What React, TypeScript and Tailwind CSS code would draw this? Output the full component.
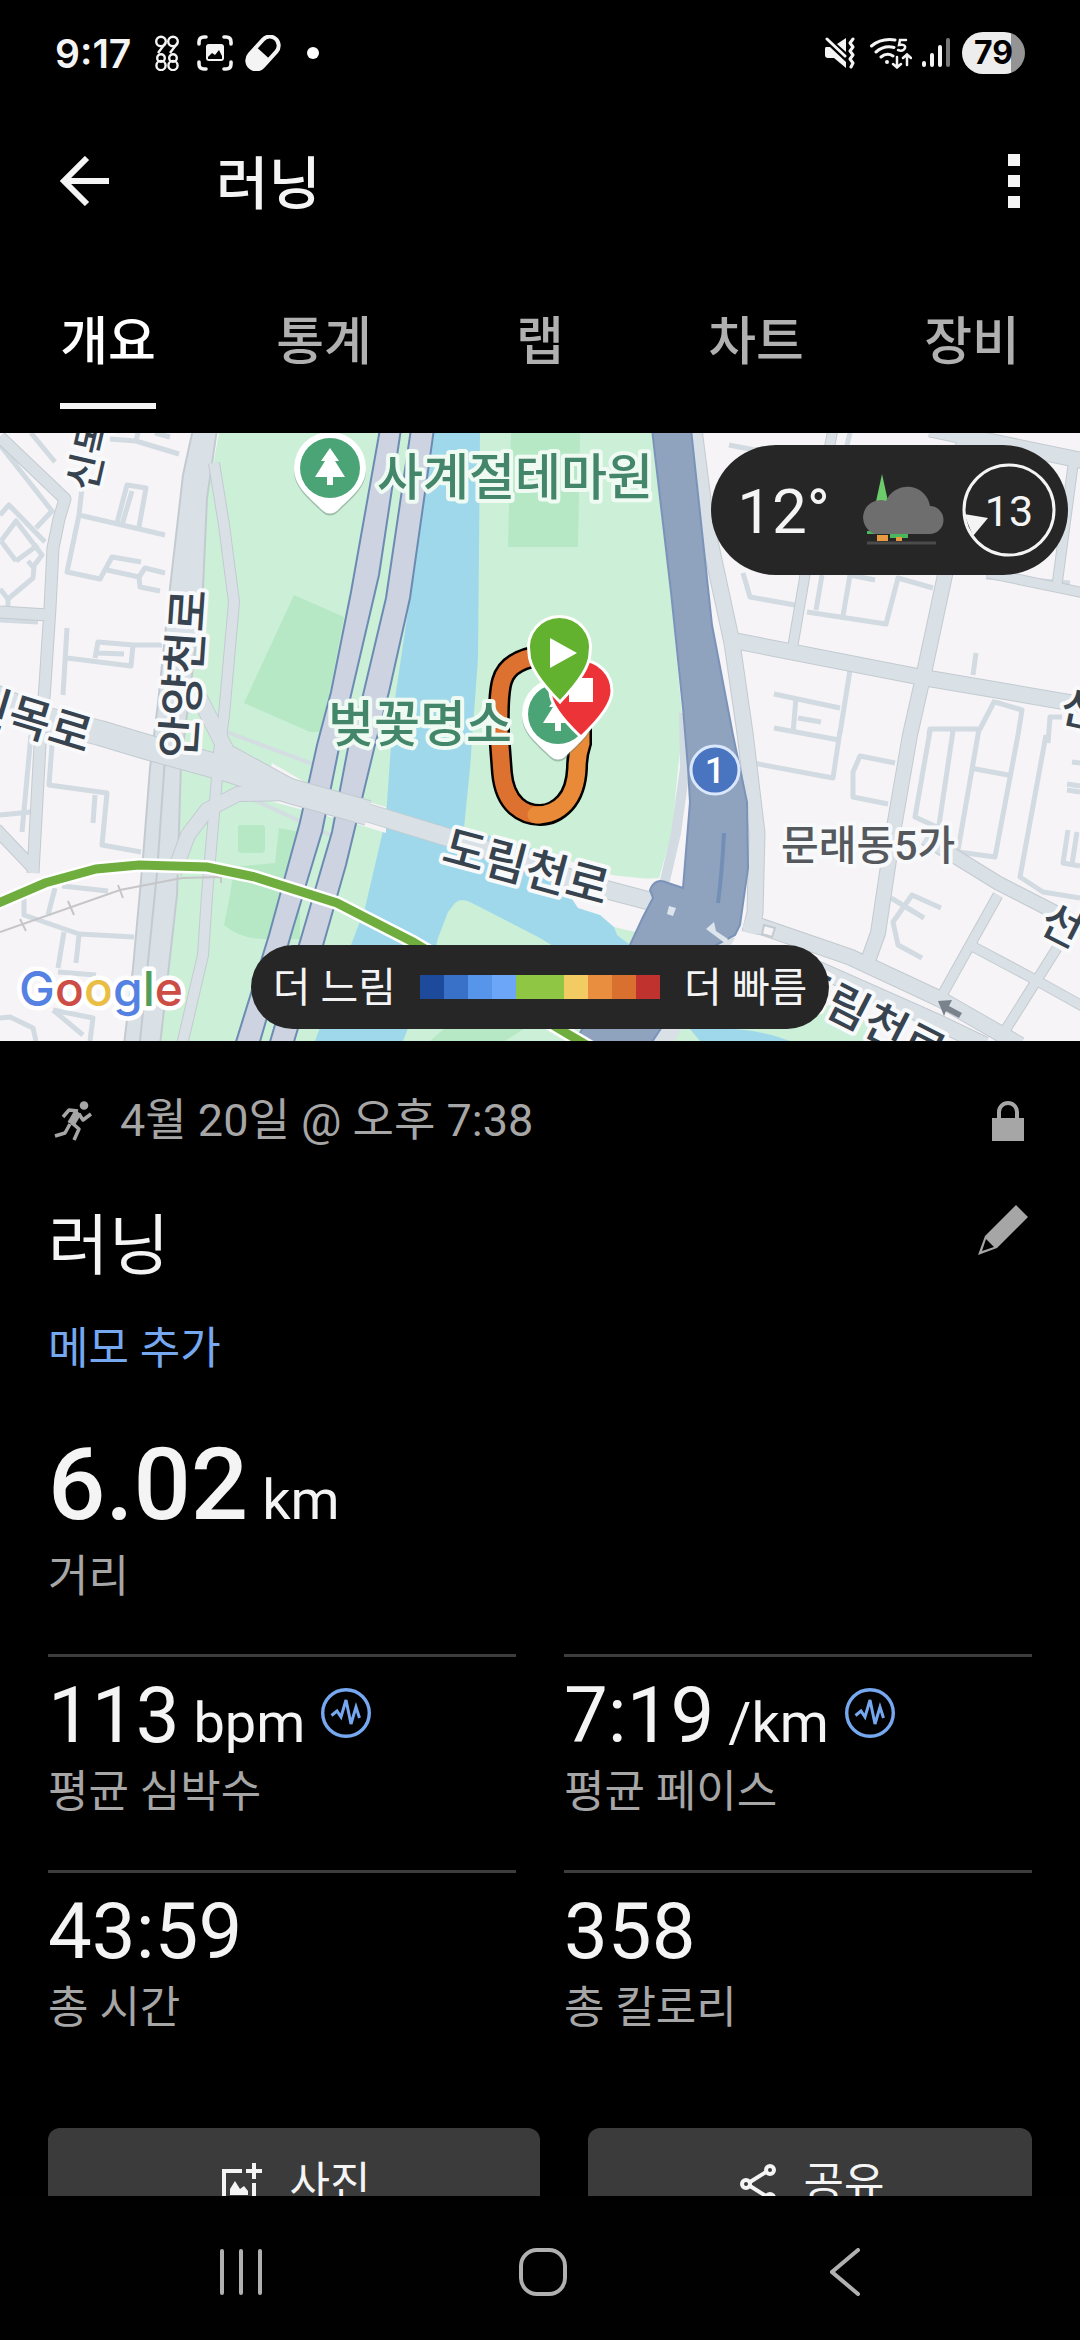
import { useState } from "react";

interface Stat {
    value: string;
    unit?: string;
    label: string;
    trend?: boolean;
}

const TABS = ['개요', '통계', '랩', '차트', '장비'];

const STATS: Stat[] = [
    { value: '113', unit: 'bpm', label: '평균 심박수', trend: true },
    { value: '7:19', unit: '/km', label: '평균 페이스', trend: true },
    { value: '43:59', label: '총 시간' },
    { value: '358', label: '총 칼로리' },
];

const PACE_COLORS = ['#1d4a9b', '#3971c9', '#5795ea', '#6ca6f8', '#8fc744', '#8fc744', '#f2cb63', '#e88e3e', '#d9702f', '#c0322e'];

// Calles secundarias del mapa
const MINOR_STREETS = [
    'M31 0L55 29M110 6L136 8L179 21M138 0L136 8M155 0L170 4',
    'M82 55L79 82L67 139L100 146L112 124L141 129M79 82L165 102',
    'M117 90L127 52L146 55L139 94M132 58L122 92',
    'M107 137L139 144L145 135L165 140M139 144L140 154L160 158',
    'M0 82L9 72L45 109M1 108L16 88L42 122L33 134L28 128M16 128L1 108M16 128L38 112M34 134L33 145L8 166L0 156M8 166L8 176',
    'M0 12L52 78L36 95M67 195L63 262M67 225L131 233L133 212L162 212M95 225L98 209L133 212M98 220L124 221M0 187L38 189',
    'M31 302L22 399M52 312L49 352L107 360L102 412L141 419M95 362L93 390M0 382L31 379',
    'M55 455L48 482M62 453L108 458M24 452L24 482L79 501L134 504M64 499L58 535M79 502L76 530M58 539L96 542',
    'M53 577L93 585L90 608M53 577L83 602M0 585L10 584L33 595L36 608',
    'M729 12L760 18M850 0L845 20M743 140L750 164L795 172M807 179L886 191L898 145L933 155M822 142L816 177M850 142L843 183M850 142L875 147',
    'M850 237L840 300M774 261L840 275M796 265L793 300M798 285L821 289M774 295L839 307M976 220L973 242',
    'M995 267L980 296L930 296L929 302M995 269L1022 277L1018 302M1048 310L1050 284L1062 284',
    'M753 330L833 345L840 298M895 330L860 323L853 339L853 364L888 371',
    'M930 298L915 384L939 395M953 298L939 392M979 296L958 417M970 335L1008 342M1018 302L995 424L958 419',
    'M1046 302L1020 444L1043 459L1080 465M1072 329L1080 330M1067 351L1080 353M1067 357L1080 359M1068 397L1063 430L1080 433M1077 399L1072 431',
    'M891 465L924 485M941 475L912 462L893 489L898 512L922 525M986 144L1070 150',
];

const CITY_ROADS = [
    { d: 'M0 4L65 66L59 86L53 115L50 175L45 252L40 312L33 440M0 179L48 182M-4 396L34 436', w: 11 },
    { d: 'M694 -4L706 90L732 210L745 300L757 400L755 480L750 500', w: 15 },
    { d: 'M965 0L945 142L924 240L910 302L893 400L878 500L868 528', w: 14 },
    { d: 'M833 -4L805 142L793 212M1074 25L1057 152M988 140L1084 160M998 462L941 564M970 512L1032 545L1084 574M1057 515L1001 604', w: 9 },
    { d: 'M726 206L920 244L1084 272M930 -4L1084 28', w: 15 },
    { d: 'M925 405L998 450L1084 494', w: 13 },
    { d: 'M745 488L850 524L940 566L1020 612M786 522L935 588L985 612', w: 15 },
];

const RIVER_ROADS = [
    { d: 'M214 30L224 92L234 169L224 282L219 319L215 369L207 462L203 522L182 612', w: 10 },
    { d: 'M198 262L227 319L293 355', w: 15 },
    { d: 'M174 440L188 402L207 377L238 361L300 360', w: 14 },
    { d: 'M365 379L450 405L600 455L657 470', w: 17 },
    { d: 'M-10 262L40 285L100 300L150 315L230 337L290 358L368 380', w: 24 },
];

function MapRoads({ roads }: { roads: { d: string; w: number }[] }) {
    return (
        <g fill="none" strokeLinejoin="round">
            {roads.map((road) => (
                <path key={road.d} d={road.d} stroke="#c3cbd1" strokeWidth={road.w + 2} />
            ))}
            {roads.map((road) => (
                <path key={road.d} d={road.d} stroke="#d9e0e6" strokeWidth={road.w} />
            ))}
        </g>
    );
}

function TreePin({ x, y }: { x: number; y: number }) {
    return (
        <g transform={`translate(${x} ${y})`}>
            <path d="M-36 2A36 36 0 1 1 36 2C36 20 22 30 9 43Q0 52 -9 43C-22 30 -36 20 -36 2Z" fill="#6b8577" opacity=".45" />
            <path d="M-36 0A36 36 0 1 1 36 0C36 18 22 28 9 41Q0 50 -9 41C-22 28 -36 18 -36 0Z" fill="#fff" />
            <circle r="30" fill="#4ba476" />
            <path d="M0 -20L9 -7H5L15 9H3V17H-3V9H-15L-5 -7H-9Z" fill="#fff" />
        </g>
    );
}

function RouteMap() {
    return (
        <svg viewBox="0 0 1080 608" className="block w-full" role="img" aria-label="러닝 경로 지도">
            <rect width="1080" height="608" fill="#f6f4f6" />

            {/* parque y rio */}
            <path d="M219 0H652L669 142L683 292L678 335L672 399L659 445L628 447L560 425L466 400L540 470L614 494L640 500L660 608H160L177 469L181 329L203 155L207 65Z" fill="#cbefd7" />
            <path d="M511 0H580L578 114H508ZM294 162L344 184L322 299H310L244 270ZM224 492Q240 506 265 506H300V399L279 395L275 430L234 434L230 462ZM240 392H262Q265 392 265 396V416Q265 420 261 420H242Q238 420 238 416V396Q238 392 240 392Z" fill="#b6e8c5" />
            <path d="M434 0H480L478 225L470 335L464 395L540 418L578 475L600 482L614 494L617 502L630 512V560L540 505L472 470Q461 464 455 470L448 479L438 505L430 540L403 608H315L351 512L365 475L386 385L391 312L396 259L410 165Z" fill="#9fd8eb" />
            <path d="M430 608L445 595H525L505 608Z" fill="#b6e8c5" />
            <path d="M660 608L690 590L760 580L850 570L880 608Z" fill="#cbefd7" />
            <path d="M690 596Q750 592 790 608H700Z" fill="#9fd8eb" />
            <path d="M272 330L310 352L386 374V400L360 392L262 366M600 441L660 447L648 484L620 472Z" fill="#f6f4f6" />
            <path d="M224 298L318 333M250 365L330 402" stroke="#d3dde2" strokeWidth="4" />

            {/* autopista junto al rio */}
            <g fill="#cdd3e0" stroke="#6c8bb2" strokeWidth="2">
                <path d="M380 -4L351 159L331 259L317 312L300 389L269 502L235 612H259L293 495L322 399L339 315L351 262L379 142L401 -4Z" />
                <path d="M411 -4L386 165L363 262L348 315L332 399L301 505L269 612H293L324 509L346 432L375 312L389 259L410 165L434 -4Z" />
            </g>

            <g fill="none" stroke="#d2dae2" strokeWidth="5" strokeLinejoin="round">
                {MINOR_STREETS.map((d) => (
                    <path key={d} d={d} />
                ))}
            </g>
            <path d="M193 -4L183 42L170 155L158 270L150 335L143 425L133 535L124 612H160L177 462L181 329L203 155L207 65L217 -4Z" fill="#d9e0e6" stroke="#c3cbd1" strokeWidth="2" />
            <path d="M165 325L157 440L140 608" fill="none" stroke="#c3cbd1" strokeWidth="2" />
            <MapRoads roads={CITY_ROADS} />
            <MapRoads roads={RIVER_ROADS} />
            <path d="M684 280L685 335L676 400L664 452" fill="none" stroke="#d3dbe2" strokeWidth="10" />
            <path d="M640 612L700 560L720 500L735 505L672 612Z" fill="#d9e0e6" />
            <path d="M652 -4L671 159L683 275L688 335L690 369L683 455L668 450Q655 444 650 457L653 465L643 484L630 512L580 600L576 612H650L716 512L735 502L740 492L748 435L747 369L733 302L712 192L691 -4Z" fill="#8fa3bf" stroke="#7b93b8" strokeWidth="2" />
            <path d="M724 400Q722 440 718 470" fill="none" stroke="#748fb6" strokeWidth="4" />
            <path d="M669 473L676 475L673 483L667 481ZM706 496L714 489L716 498L728 506L726 511Z" fill="#dce4ec" />
            <path d="M764 492L775 495L772 504L762 501Z" fill="#f6f4f6" stroke="#c3cbd1" strokeWidth="2" />
            <path d="M938 568L952 567L949 573L962 580L959 585L946 578L944 583Z" fill="#7a828b" />

            {/* vias de tren y linea de metro */}
            <path d="M0 499L120 457L182 445L220 444M20 486L26 498M68 468L74 482M118 452L123 465M221 438V450" fill="none" stroke="#c6c6c8" strokeWidth="2" />
            <path d="M-4 471L45 450L96 436L139 432L207 434L255 444L337 470L413 509L561 597L590 614" fill="none" stroke="#fff" strokeWidth="14" />
            <path d="M-4 471L45 450L96 436L139 432L207 434L255 444L337 470L413 509L561 597L590 614" fill="none" stroke="#6fae3e" strokeWidth="9" />

            <circle cx="715" cy="337" r="24" fill="#4974c0" stroke="#d9e6fb" strokeWidth="3" />
            <text x="715" y="350" textAnchor="middle" className="fill-white text-[36px] font-medium">1</text>

            <g className="fill-[#37434f] stroke-[#f8f9fb] font-medium [paint-order:stroke]" strokeWidth="8" strokeLinejoin="round">
                <text transform="translate(95 60) rotate(-77)" className="text-[40px]">신목</text>
                <text transform="translate(86 320) rotate(17)" textAnchor="end" className="text-[46px]">신목로</text>
                <text transform="translate(200 242) rotate(-86)" textAnchor="middle" className="text-[46px]">안양천로</text>
                <text transform="translate(522 450) rotate(15)" textAnchor="middle" className="text-[46px]">도림천로</text>
                <text transform="translate(784 560) rotate(27)" className="text-[46px]">도림천로</text>
                <text transform="translate(1037 497) rotate(27)" className="text-[44px]">선</text>
                <text transform="translate(1058 288) rotate(12)" className="text-[44px]">신</text>
            </g>
            <text x="781" y="427" strokeWidth="8" strokeLinejoin="round" className="fill-[#55585c] stroke-[#f8f9fb] text-[41px] font-medium [paint-order:stroke]">문래동5가</text>

            {/* recorrido */}
            <g fill="none" strokeLinecap="round">
                <path d="M545 222Q508 226 502 248Q498 262 499 300L502 340Q504 362 516 373Q526 382 540 382Q554 382 565 370Q576 358 577 335Q577 322 581 310V260Q576 226 545 222Z" stroke="#000" strokeWidth="22" />
                <path d="M545 222Q508 226 502 248Q498 262 499 300L502 340Q504 362 516 373Q526 382 540 382" stroke="#dd7130" strokeWidth="17" />
                <path d="M536 382Q554 382 565 370Q576 358 577 335Q577 322 581 310V260Q576 226 545 222" stroke="#e88a38" strokeWidth="17" />
            </g>
            <g strokeWidth="8" strokeLinejoin="round" className="fill-[#44866a] stroke-[#eefaf2] text-[50px] font-medium [paint-order:stroke]">
                <text x="377" y="62">사계절테마원</text>
                <text x="328" y="309">벚꽃명소</text>
            </g>
            <TreePin x={330} y={35} />
            <TreePin x={558} y={281} />
            <path d="M581 304Q550 275 550 258A31 31 0 1 1 612 258Q612 275 581 304Z" fill="#ec3338" stroke="#fff" strokeWidth="3" />
            <path d="M569 245H593V269H569Z" fill="#fff" />
            <path d="M560 269Q529 238 529 220A31 31 0 1 1 590 220Q590 238 560 269Z" fill="#63b22f" stroke="#fff" strokeWidth="3" />
            <path d="M550 205L577 220L550 235Z" fill="#fff" />

            <text x="19" y="573" strokeWidth="9" strokeLinejoin="round" className="stroke-white font-['Inter'] text-[48px] font-medium [paint-order:stroke]">
                <tspan fill="#5581e3">G</tspan>
                <tspan fill="#cd4c45">o</tspan>
                <tspan fill="#eabd44">o</tspan>
                <tspan fill="#5581e3">g</tspan>
                <tspan fill="#519e5a">l</tspan>
                <tspan fill="#cd4c45">e</tspan>
            </text>
        </svg>
    );
}

function StatusBar() {
    return (
        <div className="flex h-[106px] shrink-0 items-center justify-between px-[55px]">
            <div className="flex items-center">
                <span className="font-['Inter'] text-[39px] font-semibold leading-none">9:17</span>
                <svg viewBox="0 0 24 36" className="ml-6 h-9 w-6" fill="none" stroke="currentColor" strokeWidth="2.4">
                    <circle cx="6" cy="6.500" r="4.800" />
                    <circle cx="18" cy="6.500" r="4.800" />
                    <path d="M10.500 8L3 18M22.500 8L15 18" />
                    <circle cx="6" cy="23" r="3.800" />
                    <circle cx="18" cy="23" r="3.800" />
                    <circle cx="6" cy="30.500" r="4.600" />
                    <circle cx="18" cy="30.500" r="4.600" />
                </svg>
                <svg viewBox="0 0 36 36" className="ml-[18px] size-9" fill="none" stroke="currentColor" strokeWidth="3.600" strokeLinecap="round">
                    <path d="M2 9V7Q2 2 7 2H9M27 2H29Q34 2 34 7V9M34 27V29Q34 34 29 34H27M9 34H7Q2 34 2 29V27" />
                    <rect x="9" y="9" width="18" height="17" rx="3" fill="currentColor" stroke="none" />
                    <path d="M11 24V22L15 18L18 20L22 15L25 21V24Z" fill="#000" stroke="none" />
                </svg>
                <svg viewBox="0 0 36 36" className="ml-3 size-9" fill="none" stroke="currentColor">
                    <g transform="rotate(-48 18 18)">
                        <rect x="-1" y="9" width="38" height="18" rx="9" strokeWidth="4" />
                        <path d="M18 8H9A10 10 0 0 0 9 28H18Z" fill="currentColor" stroke="none" />
                    </g>
                </svg>
                <span className="ml-[26px] size-3 rounded-full bg-white" />
            </div>
            <div className="flex items-center">
                <svg viewBox="0 0 30 32" className="h-8 w-[30px]" fill="currentColor">
                    <path d="M1 10H5L21 25V31L9 21H3Q0 21 0 18V12Q0 10 1 10Z" />
                    <path d="M12 7L21 1V15Z" />
                    <path d="M2 2L20 19M28 2L25 6L28 10L25 14L28 18L25 22L28 26L26 30" fill="none" stroke="currentColor" strokeWidth="3" strokeLinecap="round" strokeLinejoin="round" />
                </svg>
                <svg viewBox="0 0 42 32" className="ml-[15px] h-8 w-[42px]" fill="none" stroke="currentColor" strokeWidth="3" strokeLinecap="round">
                    <path d="M1.500 9Q11 1 25 3M6 15Q14 8 24 10.500M11 20Q17 15 23 19" />
                    <circle cx="17" cy="25" r="2" fill="currentColor" stroke="none" />
                    <path d="M36 3H30L29 8Q36 7 35 11Q33 15 28 13" strokeWidth="2.500" />
                    <path d="M27 20V30M23 27L27 30.500L31 27M37 28V18M33 21L37 17.500L41 21" strokeWidth="2.500" />
                </svg>
                <svg viewBox="0 0 28 30" className="ml-2.5 h-[30px] w-7" stroke="currentColor" strokeWidth="4" strokeLinecap="round">
                    <path d="M2 25V27M10 17V27M18 9V27" />
                    <path d="M26 2V27" stroke="#777" />
                </svg>
                <span className="ml-3 flex h-[42px] w-[63px] items-center justify-center rounded-full bg-linear-to-r from-[#ededed] from-78% to-[#949494] to-78% font-['Inter'] text-[32px] font-bold leading-none text-black">79</span>
            </div>
        </div>
    );
}

function TrendIcon() {
    return (
        <svg viewBox="0 0 50 50" className="ml-4 size-[50px] text-[#76a8f0]" fill="none" stroke="currentColor">
            <circle cx="25" cy="25" r="23.300" strokeWidth="3.400" />
            <path d="M10.500 27.500L16 23L20 29L25 12L30 36L35 19L38.500 30" strokeWidth="3" />
        </svg>
    );
}

function WeatherBadge() {
    return (
        <div className="absolute right-3 top-3 flex h-[130px] items-center rounded-full bg-[#262626] pl-[26px] pr-3">
            <span className="pt-1 text-[62px] leading-none">12°</span>
            <svg viewBox="0 0 86 72" className="ml-7 h-[72px] w-[86px]">
                <path d="M24 0L31 32H17Z" fill="#6ccb6b" />
                <path d="M9 57H50V64H32V60H9Z" fill="#49b85c" />
                <path d="M19 61H30V67H19ZM38 63H44V67H38Z" fill="#e79a41" />
                <path d="M17 60A17 17 0 1 1 28 27A23 23 0 0 1 72 32A14 14 0 0 1 71 60Z" fill="#6e6e6e" />
                <path d="M9 69H78" stroke="#4b4b4b" strokeWidth="3" />
            </svg>
            <div className="relative ml-[18px] grid size-[94px] place-items-center">
                <svg viewBox="0 0 94 94" className="absolute inset-0">
                    <circle cx="47" cy="47" r="45" fill="none" stroke="#f4f4f4" strokeWidth="3" />
                    <path d="M2 51L26 55L11 73Z" fill="#f4f4f4" />
                </svg>
                <span className="pt-0.5 text-[43px] leading-none">13</span>
            </div>
        </div>
    );
}

export default function ActivityPage() {
    const [activeTab, setActiveTab] = useState('개요');

    return (
        <div className="flex h-screen flex-col overflow-hidden bg-black font-['Roboto','Noto_Sans_CJK_KR',sans-serif] text-[#f4f4f4]">
            <StatusBar />

            <header className="flex h-[150px] shrink-0 items-center px-[60px]">
                <button aria-label="뒤로">
                    <svg viewBox="0 0 50 50" className="size-[50px]" fill="none" stroke="currentColor" strokeWidth="6">
                        <path d="M49 25H5M27 2L4 25L27 48" />
                    </svg>
                </button>
                <h1 className="ml-[106px] pt-1.5 text-[57px] font-medium leading-none">러닝</h1>
                <button aria-label="메뉴" className="ml-auto flex flex-col gap-[9px]">
                    <span className="size-3 bg-current" />
                    <span className="size-3 bg-current" />
                    <span className="size-3 bg-current" />
                </button>
            </header>

            <nav className="grid h-[177px] shrink-0 grid-cols-5 pb-6">
                {TABS.map((tab) => (
                    <button key={tab} onClick={() => setActiveTab(tab)} className="flex justify-center text-[52px] font-medium">
                        <span className={`flex h-full items-center border-b-6 pt-[26px] ${tab === activeTab ? 'border-[#f4f4f4] text-white' : 'border-transparent text-[#b0b0b0]'}`}>
                            {tab}
                        </span>
                    </button>
                ))}
            </nav>

            <main className="min-h-0 flex-1 overflow-hidden">
                <section className="relative">
                    <RouteMap />
                    <WeatherBadge />
                    <div className="absolute inset-x-0 bottom-3 mx-auto flex h-[84px] w-fit items-center gap-6 whitespace-nowrap rounded-full bg-[#262626] px-[22px] text-[41px]">
                        <span className="pt-1">더 느림</span>
                        <div className="flex">
                            {PACE_COLORS.map((color, i) => (
                                <span key={i} className="size-6" style={{ backgroundColor: color }} />
                            ))}
                        </div>
                        <span className="pt-1">더 빠름</span>
                    </div>
                </section>

                <section className="px-12 pt-14">
                    <div className="flex h-12 items-center text-[45px] leading-[48px] text-[#a6a6a6]">
                        <svg viewBox="0 0 40 40" className="ml-1.5 h-10 w-10" fill="none" stroke="currentColor" strokeLinejoin="round">
                            <circle cx="30" cy="4.500" r="4.300" fill="currentColor" stroke="none" />
                            <path d="M24 11L17 23" strokeWidth="8" />
                            <path d="M24 10L15 9L9 16M25 13L29 19L37 13M18 22L25 28L20 39M16 23L11 32L1 35" strokeWidth="3.500" />
                        </svg>
                        <span className="ml-[26px]">4월 20일 @ 오후 7:38</span>
                        <svg viewBox="0 0 32 40" className="ml-auto mr-2 h-10 w-8">
                            <path d="M0 17H32V40H0Z" fill="currentColor" />
                            <path d="M7 18V11A9 9 0 0 1 25 11V18" fill="none" stroke="currentColor" strokeWidth="4" />
                        </svg>
                    </div>

                    <div className="mt-[60px] flex h-20 justify-between">
                        <h2 className="text-[66px] leading-[84px]">러닝</h2>
                        <button aria-label="이름 수정" className="mr-1 self-start text-[#a6a6a6]">
                            <svg viewBox="0 0 50 50" className="size-[50px]" fill="currentColor">
                                <path fillRule="evenodd" d="M38 0L50 12L19 43L0 50L7 31ZM8 34L4 46L16 42Z" />
                            </svg>
                        </button>
                    </div>
                    <button className="mt-10 block text-[44px] leading-[48px] text-[#76a8f0]">메모 추가</button>

                    <div className="mt-[52px] pb-[53px]">
                        <p className="h-[120px] text-[56px] leading-[120px]">
                            <span className="text-[101px] font-medium">6.02</span> km
                        </p>
                        <p className="mt-2 text-[44px] leading-[48px] text-[#a6a6a6]">거리</p>
                    </div>

                    <div className="grid grid-cols-2 gap-x-12">
                        {STATS.map((stat) => (
                            <div key={stat.label} className="border-t-3 border-[#3d3d3d] pb-[54px] pt-2">
                                <div className="flex h-[96px] items-center">
                                    <p className="pt-3 text-[56px] leading-[96px]">
                                        <span className="text-[78px]">{stat.value}</span>
                                        {stat.unit && ` ${stat.unit}`}
                                    </p>
                                    {stat.trend && <TrendIcon />}
                                </div>
                                <p className="mt-[7px] text-[44px] leading-[48px] text-[#a6a6a6]">{stat.label}</p>
                            </div>
                        ))}
                    </div>

                    <div className="mt-[42px] grid grid-cols-[492fr_444fr] gap-x-12 text-[44px]">
                        <button className="flex h-[112px] items-center justify-center gap-7 rounded-xl bg-[#3b3b3b] pl-1">
                            <svg viewBox="0 0 40 42" className="h-[42px] w-10" fill="none" stroke="currentColor" strokeWidth="4">
                                <path d="M20 8H2V40H32V20M32 0V16M24 8H40" />
                                <path d="M8 32V26L13 18L18 26L22 23L26 28V32Z" fill="currentColor" stroke="none" />
                            </svg>
                            사진
                        </button>
                        <button className="flex h-[112px] items-center justify-center gap-7 rounded-xl bg-[#3b3b3b] pl-1">
                            <svg viewBox="0 0 36 40" className="h-10 w-9" fill="none" stroke="currentColor" strokeWidth="4">
                                <circle cx="30" cy="6" r="4" />
                                <circle cx="6" cy="20" r="4" />
                                <circle cx="30" cy="34" r="4" />
                                <path d="M10 18L26 8M10 22L26 32" />
                            </svg>
                            공유
                        </button>
                    </div>
                </section>
            </main>

            <footer className="grid h-36 shrink-0 grid-cols-3 items-center bg-[#010101] pb-1 pl-[90px] pr-[84px] pt-3 text-[#b0b0b0]">
                <button aria-label="최근 앱" className="grid place-items-center">
                    <svg viewBox="0 0 44 48" className="h-12 w-11" stroke="currentColor" strokeWidth="4" strokeLinecap="round">
                        <path d="M3 3V45M22 3V45M41 3V45" />
                    </svg>
                </button>
                <button aria-label="홈" className="grid place-items-center">
                    <span className="size-12 rounded-[18px] border-4 border-current" />
                </button>
                <button aria-label="뒤로" className="grid place-items-center">
                    <svg viewBox="0 0 30 48" className="h-12 w-[30px]" fill="none" stroke="currentColor" strokeWidth="4" strokeLinecap="round">
                        <path d="M28 2L2 24L28 46" />
                    </svg>
                </button>
            </footer>
        </div>
    );
}
